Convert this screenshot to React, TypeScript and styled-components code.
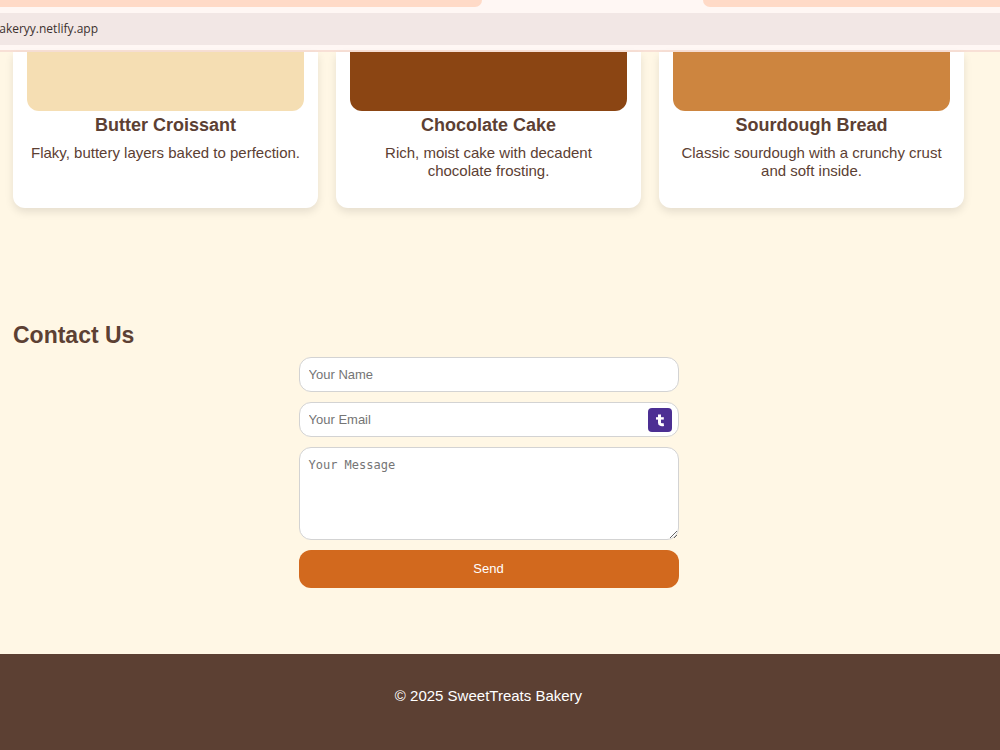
import React from "react";
import styled, { createGlobalStyle } from "styled-components";

const GlobalStyle = createGlobalStyle`
  *, *::before, *::after { box-sizing: border-box; }
  html, body, #root { height: 100%; }
  body {
    margin: 0;
    background: #fff7e5;
    color: #5c4033;
    font-family: "Liberation Sans", Arial, sans-serif;
    font-size: 15px;
    line-height: 18px;
  }
  h2, h3, p { margin: 0; }
`;

const Page = styled.div`
  min-height: 100%;
  display: flex;
  flex-direction: column;
`;

const BrowserBar = styled.header`
  background: #fff7f4;
  border-bottom: 2px solid #f8e0d6;
`;

const TabStrip = styled.div`
  display: flex;
  justify-content: space-between;
  height: 7px;
`;

const TabEdge = styled.div<{ $side: "left" | "right" }>`
  width: ${(p) => (p.$side === "left" ? "48.2%" : "29.7%")};
  background: #ffdac7;
  border-radius: ${(p) => (p.$side === "left" ? "0 0 12px 0" : "0 0 0 12px")};
`;

const AddressBar = styled.div`
  display: flex;
  align-items: center;
  height: 32px;
  margin: 6px 0 5px;
  background: #f2e7e5;
`;

const Address = styled.span`
  display: flex;
  justify-content: flex-end;
  width: 98px;
  overflow: hidden;
  color: #3b302e;
  font-family: "Segoe UI", "Open Sans", sans-serif;
  font-size: 12px;
  white-space: nowrap;
`;

const Main = styled.main`
  flex: 1;
  padding: 0 36px 66px 13px;
`;

const Products = styled.section`
  display: grid;
  grid-template-columns: repeat(3, 1fr);
  gap: 18px;
  margin-bottom: 113px;
`;

const Card = styled.article`
  padding: 0 14px 28px;
  background: #fff;
  border-radius: 0 0 12px 12px;
  box-shadow: 0 4px 9px rgba(0, 0, 0, 0.1);
  text-align: center;
`;

const Photo = styled.div<{ $color: string }>`
  height: 59px;
  background: ${(p) => p.$color};
  border-radius: 0 0 12px 12px;
`;

const ProductName = styled.h3`
  margin: 4px 0 9px;
  font-size: 18px;
  line-height: 20px;
`;

const Description = styled.p`
  padding: 0 2px;
`;

const SectionTitle = styled.h2`
  margin-bottom: 8px;
  font-size: 23px;
  line-height: 28px;
`;

const Form = styled.form`
  display: flex;
  flex-direction: column;
  gap: 10px;
  width: 380px;
  max-width: 100%;
  margin: 0 auto;
`;

const Field = styled.label`
  position: relative;
  display: flex;
`;

const Input = styled.input`
  width: 100%;
  height: 35px;
  padding: 0 9px;
  background: #fff;
  border: 1px solid #d3d3d3;
  border-radius: 12px;
  color: #5c4033;
  font: 13px "Liberation Sans", Arial, sans-serif;
  &::placeholder { color: #757575; }
`;

const Message = styled.textarea`
  width: 100%;
  height: 93px;
  padding: 9px;
  background: #fff;
  border: 1px solid #d3d3d3;
  border-radius: 12px;
  color: #5c4033;
  font: 12px/16px Consolas, "DejaVu Sans Mono", monospace;
  resize: both;
  &::placeholder { color: #757575; }
`;

const FillButton = styled.button`
  position: absolute;
  top: 6px;
  right: 7px;
  width: 24px;
  height: 24px;
  padding: 0;
  border: 0;
  border-radius: 4px;
  background: #4c2f93;
`;

const FillIcon = styled.svg`
  display: block;
`;

const SendButton = styled.button`
  height: 38px;
  padding: 0 0 2px;
  border: 0;
  border-radius: 12px;
  background: #d2691e;
  color: #fff;
  font: 13px "Liberation Sans", Arial, sans-serif;
`;

const Footer = styled.footer`
  padding: 33px 23px 45px 0;
  background: #5c4033;
  color: #fff;
  text-align: center;
`;

const products = [
  { name: "Butter Croissant", text: "Flaky, buttery layers baked to perfection.", color: "#f5deb3" },
  { name: "Chocolate Cake", text: "Rich, moist cake with decadent chocolate frosting.", color: "#8b4513" },
  { name: "Sourdough Bread", text: "Classic sourdough with a crunchy crust and soft inside.", color: "#cd853f" },
];

export default function App() {
  return (
    <Page>
      <GlobalStyle />
      <BrowserBar>
        <TabStrip>
          <TabEdge $side="left" />
          <TabEdge $side="right" />
        </TabStrip>
        <AddressBar>
          <Address>akeryy.netlify.app</Address>
        </AddressBar>
      </BrowserBar>
      <Main>
        <Products>
          {products.map((p) => (
            <Card key={p.name}>
              <Photo $color={p.color} />
              <ProductName>{p.name}</ProductName>
              <Description>{p.text}</Description>
            </Card>
          ))}
        </Products>
        <section>
          <SectionTitle>Contact Us</SectionTitle>
          <Form onSubmit={(e) => e.preventDefault()}>
            <Field>
              <Input type="text" placeholder="Your Name" aria-label="Your Name" />
            </Field>
            <Field>
              <Input type="email" placeholder="Your Email" aria-label="Your Email" />
              <FillButton type="button" aria-label="Fill email">
                <FillIcon width="24" height="24" viewBox="0 0 24 24" fill="none" stroke="#fff">
                  <path d="M11.5 6.5V14.8Q11.5 17.3 15.8 16.5" strokeWidth="3" />
                  <path d="M8 10.4H15.8" strokeWidth="2.4" />
                </FillIcon>
              </FillButton>
            </Field>
            <Field>
              <Message placeholder="Your Message" aria-label="Your Message" />
            </Field>
            <SendButton type="submit">Send</SendButton>
          </Form>
        </section>
      </Main>
      <Footer>
        <p>© 2025 SweetTreats Bakery</p>
      </Footer>
    </Page>
  );
}
